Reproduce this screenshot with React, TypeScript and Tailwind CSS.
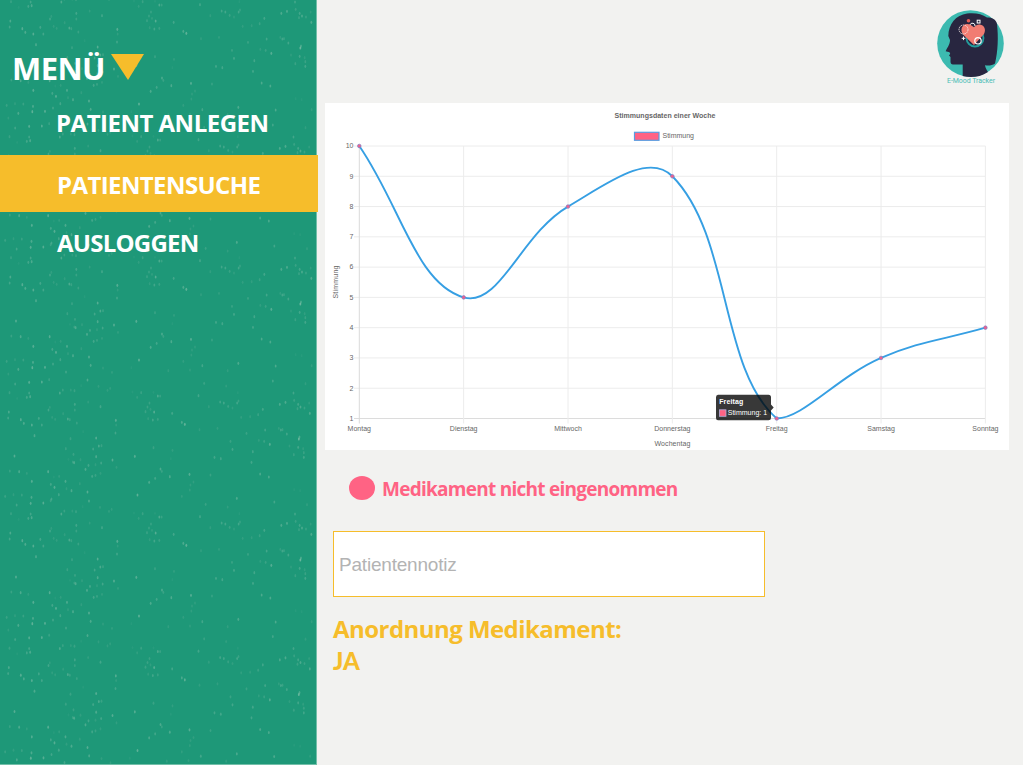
import React from "react";

const days = ["Montag", "Dienstag", "Mittwoch", "Donnerstag", "Freitag", "Samstag", "Sonntag"];
const moods = [10, 5, 8, 9, 1, 3, 4];
const LEFT = 34.3;
const TOP = 43;
const BOTTOM = 315.5;
const STEP = 104.35;
const px = (i: number) => LEFT + i * STEP;
const py = (v: number) => BOTTOM - ((v - 1) * (BOTTOM - TOP)) / 9;
const clamp = (y: number) => Math.min(BOTTOM, Math.max(TOP, y));

function curve() {
  const p = moods.map((m, i) => ({ x: px(i), y: py(m) }));
  const controls = p.map((c, i) => {
    const a = p[i - 1] ?? c;
    const b = p[i + 1] ?? c;
    const d1 = Math.hypot(c.x - a.x, c.y - a.y);
    const d2 = Math.hypot(b.x - c.x, b.y - c.y);
    const fa = (0.4 * d1) / (d1 + d2);
    const fb = (0.4 * d2) / (d1 + d2);
    return {
      inX: c.x - fa * (b.x - a.x),
      inY: clamp(c.y - fa * (b.y - a.y)),
      outX: c.x + fb * (b.x - a.x),
      outY: clamp(c.y + fb * (b.y - a.y)),
    };
  });
  return p
    .map((c, i) =>
      i === 0
        ? `M${c.x} ${c.y}`
        : `C${controls[i - 1].outX} ${controls[i - 1].outY} ${controls[i].inX} ${controls[i].inY} ${c.x} ${c.y}`,
    )
    .join(" ");
}

// Speckles of one paper tile: x, y, strength (thirds of a pixel)
const specks: number[][] = [
  [92, 10, 6], [50, 15, 4], [130, 9, 6], [152, 2, 3], [267, 3, 5], [248, 20, 1], [300, 22, 2], [335, 28, 2], [327, 34, 2],
  [33, 41, 3], [92, 42, 4], [95, 53, 5], [85, 55, 4], [56, 58, 1], [184, 42, 5], [193, 33, 3], [228, 35, 3], [217, 33, 2],
  [229, 76, 4], [229, 93, 3], [269, 69, 2], [306, 83, 4], [31, 99, 5], [29, 117, 4], [67, 122, 6], [76, 133, 5], [100, 138, 6],
  [130, 138, 4], [121, 118, 4], [150, 93, 4], [154, 85, 2], [161, 115, 2], [170, 121, 2], [194, 104, 2], [208, 120, 5], [214, 122, 3],
  [235, 132, 3], [108, 170, 5], [254, 158, 1], [293, 177, 6], [216, 179, 3], [301, 201, 5], [309, 200, 3], [284, 210, 4], [293, 233, 5],
  [202, 209, 3], [225, 226, 3], [227, 251, 5], [223, 249, 3], [210, 241, 1], [246, 242, 2], [48, 231, 6], [261, 271, 5], [270, 259, 4],
  [308, 252, 4], [291, 257, 2], [352, 124, 6], [351, 162, 4], [353, 138, 2], [342, 243, 6], [354, 265, 2], [281, 292, 4], [291, 289, 3],
  [306, 283, 2], [34, 276, 3], [62, 278, 5], [149, 278, 6], [100, 307, 6], [85, 283, 2], [201, 307, 5], [182, 292, 2], [166, 294, 1],
  [168, 325, 6], [157, 316, 4], [219, 335, 5], [204, 329, 2], [181, 347, 4], [159, 360, 4], [244, 314, 2], [267, 339, 6], [272, 364, 5],
  [99, 355, 5], [97, 371, 7], [135, 370, 6], [198, 384, 4], [55, 376, 5], [20, 352, 3], [45, 347, 2], [70, 348, 3], [25, 390, 2],
  [309, 372, 2], [336, 385, 2], [394, 371, 1], [417, 348, 7], [409, 232, 6], [465, 206, 3], [522, 214, 2], [517, 239, 1], [486, 270, 5],
  [490, 277, 3], [514, 293, 5], [470, 298, 4], [452, 310, 5], [573, 286, 6], [585, 309, 2], [576, 318, 2], [574, 333, 2], [550, 352, 2],
  [607, 365, 4], [636, 288, 3], [648, 235, 4], [667, 239, 4], [696, 187, 3], [702, 211, 4], [715, 358, 5], [683, 380, 2], [827, 366, 5],
  [785, 285, 5], [811, 294, 5], [759, 250, 4], [763, 218, 4], [744, 163, 3], [814, 196, 6], [797, 187, 3], [781, 184, 2], [800, 153, 4],
  [847, 153, 4], [852, 152, 3], [841, 148, 2], [865, 165, 4], [901, 180, 8], [903, 174, 5], [899, 205, 4], [886, 227, 3], [916, 221, 3],
  [916, 235, 4], [914, 209, 2], [935, 365, 2], [887, 332, 1], [905, 335, 1], [873, 201, 2], [823, 6, 4], [921, 14, 2], [885, 42, 4],
  [887, 64, 3], [861, 70, 5], [844, 76, 5], [899, 76, 4], [906, 84, 5], [897, 89, 3], [918, 87, 3], [934, 103, 5], [932, 72, 2],
  [793, 91, 4], [779, 107, 3], [755, 113, 2], [728, 115, 2], [716, 72, 4], [720, 66, 3], [702, 87, 2], [689, 82, 3], [676, 72, 4],
  [665, 69, 4], [683, 21, 2], [718, 41, 1], [617, 13, 3], [600, 50, 4], [631, 83, 2], [657, 148, 2], [603, 152, 2], [550, 130, 5],
  [559, 136, 7], [521, 103, 4], [478, 51, 5], [485, 51, 3], [453, 72, 3], [447, 84, 3], [441, 98, 3], [456, 91, 2], [467, 99, 6],
  [478, 121, 3], [463, 123, 4], [449, 119, 2], [465, 40, 1], [428, 41, 3], [416, 55, 2], [402, 39, 1], [505, 380, 2], [570, 378, 2],
];

// Origin of each tile copy and how much of its height is visible
const tiles = [
  { x: 0, y: -12, h: 405 },
  { x: -1.5, y: 123, h: 363 },
  { x: 0, y: 244, h: 405 },
  { x: -1.5, y: 379, h: 363 },
  { x: 0, y: 500, h: 405 },
  { x: -1.5, y: 634.5, h: 390 },
];

function Texture() {
  return (
    <svg className="absolute inset-0 h-full w-full" viewBox="0 0 317 765" aria-hidden="true">
      {tiles.map((tile) => (
        <g key={tile.y} transform={`translate(${tile.x} ${tile.y})`}>
          {specks
            .filter((s) => s[1] < tile.h)
            .map(([x, y, a], i) => (
              <ellipse key={i} cx={x / 3} cy={y / 3} rx="0.9" ry="1.6" fill="#a9d0bd" opacity={a * 0.066} />
            ))}
        </g>
      ))}
      <path d="M316.5 0V765M0 764.5H317" stroke="#72bfa9" />
    </svg>
  );
}

function Logo() {
  return (
    <svg className="h-[80px] w-[74px]" viewBox="0 0 74 80" aria-label="E-Mood Tracker">
      <circle cx="37.5" cy="36.5" r="33.3" fill="#3cbab0" />
      <path
        d="M15.3 29C15.5 17 23 8 34 6.5C42 5.5 49 7 54 10.5C59 10.5 63 12 64 17C65.5 30 65 44 62 56.5C59 58.5 56 59 52 58.3C52.5 61 53.5 63 55 65C47 70.5 37 71 29.7 69V57.5H20Q17.5 57.5 17.5 54.5V50L16 48.5L17.2 46.8L16.5 45.3L12.7 44.3C13.5 41.5 17 38 17 33Z"
        fill="#282640"
      />
      <circle cx="42" cy="31" r="8.5" fill="none" stroke="#249c9c" strokeWidth="1.8" />
      <path d="M41 38L30.5 28C25.5 22 30.5 15 37 17.5L41 20.3C46 14 55 19.5 51 27Z" fill="#f17c72" />
      <circle cx="35.5" cy="13.8" r="1.8" fill="#e55c53" />
      <path d="M37 17.8a2.6 2.6 0 0 1 5 1.2" fill="none" stroke="#fff" />
      <circle cx="30.5" cy="22.5" r="4.5" fill="none" stroke="#f6e9e5" strokeWidth="0.9" strokeDasharray="1.5 .7" />
      <rect x="44.2" y="13.2" width="2.8" height="2.8" fill="none" stroke="#fff" />
      <circle cx="45" cy="33.8" r="3.2" fill="none" stroke="#fff" strokeWidth="1.2" />
      <path d="M30.5 29.5v3.6M28.7 31.3h3.6" stroke="#fff" />
      <text
        x="14"
        y="76.3"
        textLength="48"
        fontSize="7"
        fontWeight="400"
        fill="#4bbdb6"
        className="font-['Roboto',sans-serif]"
      >
        E-Mood Tracker
      </text>
    </svg>
  );
}

function MoodChart() {
  return (
    <svg
      className="block h-[347px] w-[684px] bg-white font-['Liberation_Sans',Arial,sans-serif] font-normal"
      viewBox="0 0 684 347"
      fontSize="7"
      fill="#666"
    >
      <text x="340" y="15.3" textAnchor="middle" fontWeight="bold" textLength="101">
        Stimmungsdaten einer Woche
      </text>
      <rect x="309.5" y="29.3" width="24.5" height="8" fill="#ff6384" stroke="#5a9de0" strokeWidth="1.2" />
      <text x="337.5" y="35.3" textLength="31.5">Stimmung</text>
      {[1, 2, 3, 4, 5, 6, 7, 8, 9, 10].map((v) => (
        <g key={v}>
          <path d={`M29 ${py(v)}H660.5`} stroke={v === 1 ? "#dcdcdc" : "#ececec"} />
          <text x="28.5" y={py(v) + 2.3} textAnchor="end">{v}</text>
        </g>
      ))}
      {days.map((d, i) => (
        <g key={d}>
          <path d={`M${px(i)} ${TOP}V320.5`} stroke={i === 0 ? "#dadada" : "#ececec"} />
          <text x={px(i)} y="327.7" textAnchor="middle">{d}</text>
        </g>
      ))}
      <text x="347.5" y="342.5" textAnchor="middle" textLength="36">Wochentag</text>
      <text transform="translate(12.5 179) rotate(-90)" textAnchor="middle" textLength="33">Stimmung</text>
      <path d={curve()} fill="none" stroke="#369fe3" strokeWidth="1.9" />
      {moods.map((m, i) => (
        <circle key={i} cx={px(i)} cy={py(m)} r="1.8" fill="#ef5f8e" stroke="#7b83c5" strokeWidth="0.7" />
      ))}
      <path
        d="M393 291.7H443.5Q446 291.7 446 294.2V301.5L448.7 304.5L446 307.5V315Q446 317.3 443.5 317.3H393Q391 317.3 391 315V294.2Q391 291.7 393 291.7Z"
        fill="#000"
        fillOpacity="0.78"
      />
      <text x="394.2" y="300.8" fill="#fff" fontWeight="bold" textLength="24">Freitag</text>
      <rect x="394.5" y="306.8" width="6.5" height="6.5" fill="#ff6384" stroke="#b1afdb" strokeWidth="0.8" />
      <text x="402.7" y="312.2" fill="#fff" textLength="39.5">Stimmung: 1</text>
    </svg>
  );
}

export default function App() {
  return (
    <div className="flex h-[765px] w-[1023px] overflow-hidden bg-[#f2f2f0] font-['Open_Sans','Noto_Sans',sans-serif] font-bold">
      <aside className="relative w-[317px] shrink-0 bg-[#1e9878] text-white">
        <Texture />
        <nav className="relative flex w-[318px] flex-col whitespace-nowrap text-[24px]">
          <div className="flex h-[92px] pt-[48px] pl-[12px] text-[31px] leading-[40px]">
            <span className="w-[99px] tracking-[-0.6px]">MENÜ</span>
            <svg className="mt-[6px] h-[26px] w-[33px]" viewBox="0 0 33 26">
              <path d="M0 0H33L17 26Z" fill="#f6bd2b" />
            </svg>
          </div>
          <a className="flex h-[63px] items-center pb-[2px] pl-[56px] tracking-[-0.5px]">PATIENT ANLEGEN</a>
          <a className="flex h-[57px] items-center bg-[#f6bd2b] pt-[2px] pl-[57px] tracking-[-0.6px]">PATIENTENSUCHE</a>
          <a className="flex h-[64px] items-center pb-[2px] pl-[57px] tracking-[-0.75px]">AUSLOGGEN</a>
        </nav>
      </aside>
      <main className="flex min-w-0 flex-1 flex-col pl-[8px]">
        <header className="flex h-[103px] justify-end pt-[7px] pr-[16px]">
          <Logo />
        </header>
        <MoodChart />
        <div className="mt-[25px] ml-[24px] flex h-[26px] items-center text-[19px] text-[#ff6384]">
          <span className="mr-[7px] h-[24px] w-[26px] rounded-[50%] bg-[#ff6384]" />
          <span className="pt-[2px] tracking-[-0.74px] whitespace-nowrap">Medikament nicht eingenommen</span>
        </div>
        <input
          className="mt-[30px] ml-[8px] h-[66px] w-[432px] border border-[#f6bd2b] bg-white px-[5px] pt-[2px] font-['Liberation_Sans',Arial,sans-serif] text-[19px] font-normal tracking-[-0.2px] outline-none placeholder:text-[#b3b3b3]"
          placeholder="Patientennotiz"
        />
        <div className="mt-[16px] ml-[8px] flex flex-col text-[24px] leading-[32px] whitespace-nowrap text-[#f6bd2b]">
          <span className="tracking-[-0.55px]">Anordnung Medikament:</span>
          <span className="font-['Lato',sans-serif] font-black">JA</span>
        </div>
      </main>
    </div>
  );
}
